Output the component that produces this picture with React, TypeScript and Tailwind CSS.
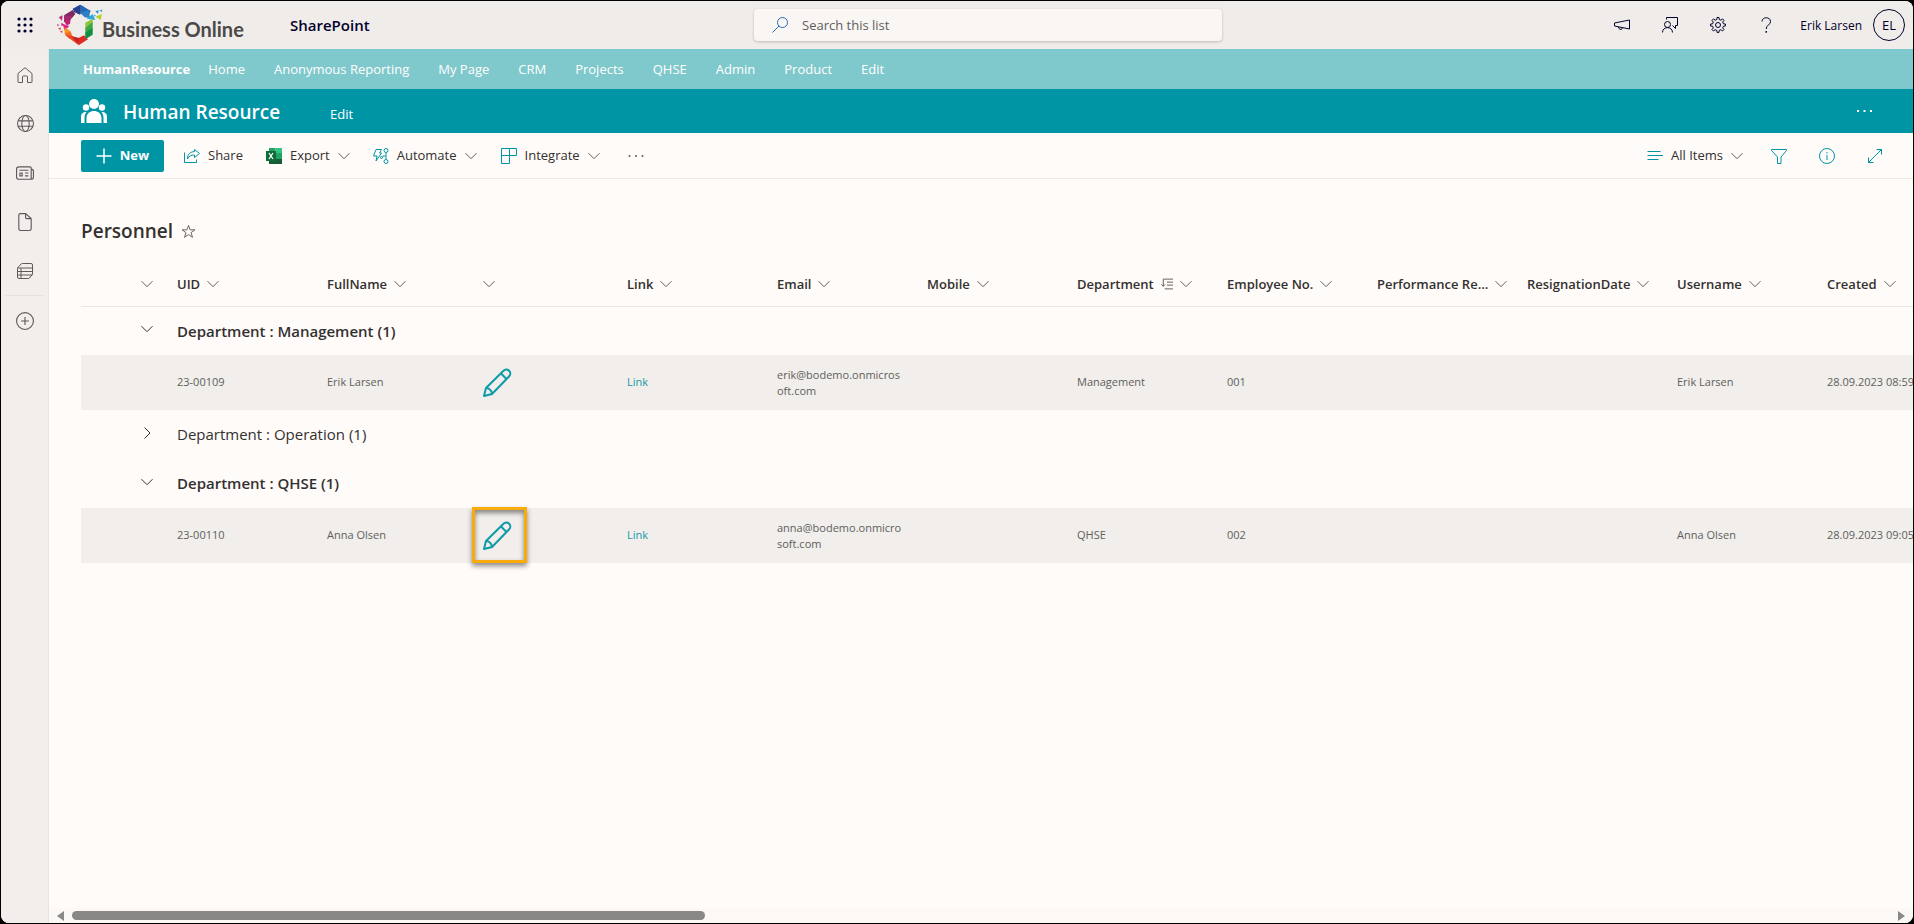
import React from 'react'

const Chevron: React.FC<{ className?: string; right?: boolean }> = ({ className = '', right }) => (
  <svg width="12" height="12" viewBox="0 0 12 12" fill="none" stroke="currentColor" className={`shrink-0 ${className}`}>
    <path d={right ? 'M3.5.5L9 6l-5.5 5.5' : 'M.5 3.2L6 8.7l5.5-5.5'} />
  </svg>
)

const Icon: React.FC<{ size?: number; children: React.ReactNode; className?: string }> = ({ size = 16, children, className = '' }) => (
  <svg width={size} height={size} viewBox="0 0 16 16" fill="none" stroke="currentColor" strokeWidth="1" className={`shrink-0 ${className}`}>
    {children}
  </svg>
)

const Logo = () => (
  <svg width="47" height="42" viewBox="9 6 141 126" className="shrink-0">
    <path d="M56 20L78 8l14 8-14 22-18-8z" fill="#27408f" />
    <path d="M78 8l32 18-6 16-26-10z" fill="#2a66b4" />
    <path d="M78 32l26-8 4 24-16-2z" fill="#2f7fc6" />
    <path d="M98 50l18-14 8 18z" fill="#29a9df" />
    <path d="M30 40l26-16 8 12-12 14z" fill="#7c2a63" />
    <path d="M30 40l24 2-6 14-18 4z" fill="#a02a6c" />
    <path d="M30 58l20-8-2 16-10 4z" fill="#c0246f" />
    <path d="M14 46l12-6-2 16zM22 62l10 6-10 4zM10 66l6 3-6 4z" fill="#c32a7c" />
    <path d="M26 66l20 6-14 14z" fill="#e0218a" />
    <path d="M12 80l8-4v8zM18 88l8-2-2 8z" fill="#e8402f" />
    <path d="M32 76l18 12v18l-18-10z" fill="#f7931e" />
    <path d="M32 94l18-4 6 14-10 6z" fill="#f26a21" />
    <path d="M32 98l22 4 20 28z" fill="#ee4423" />
    <path d="M52 102l24 6-2 22z" fill="#c9211e" />
    <path d="M74 108l16-8 12 12-28 18z" fill="#e02a24" />
    <path d="M94 62l22-12v14l-22 16z" fill="#8cc63f" />
    <path d="M94 78l22-18v22L94 98z" fill="#3fa845" />
    <path d="M94 92l22-14v20l-22 14z" fill="#0f8f43" />
    <path d="M124 28l10-3-2 10z" fill="#2a7fc6" />
    <path d="M136 26l9-4-1 8z" fill="#29a9df" />
    <path d="M124 44l20-8-4 18z" fill="#b5cf2b" />
    <path d="M120 38l6 2-5 4z" fill="#29a9df" />
  </svg>
)

const Pencil = () => (
  <svg width="30" height="30" viewBox="0 0 30 30" fill="none" stroke="#0f9aa8" strokeWidth="2" strokeLinejoin="round">
    <path d="M2 28l2-8L21.500 2.800a3.800 3.800 0 0 1 5.700 5.500L10 26z" />
    <path d="M19 5.500l5.500 5.500M4 20c3 0 6 2.500 6 6" />
  </svg>
)

const navItems = ['Home', 'Anonymous Reporting', 'My Page', 'CRM', 'Projects', 'QHSE', 'Admin', 'Product', 'Edit']

const columns = ['UID', 'FullName', '', 'Link', 'Email', 'Mobile', 'Department', 'Employee No.', 'Performance Re...', 'ResignationDate', 'Username', 'Created']

type Person = {
  uid: string
  name: string
  email: [string, string]
  department: string
  no: string
  created: string
  highlighted?: boolean
}

const groups: { name: string; open: boolean; people: Person[] }[] = [
  {
    name: 'Management',
    open: true,
    people: [{ uid: '23-00109', name: 'Erik Larsen', email: ['erik@bodemo.onmicros', 'oft.com'], department: 'Management', no: '001', created: '28.09.2023 08:59' }],
  },
  { name: 'Operation', open: false, people: [] },
  {
    name: 'QHSE',
    open: true,
    people: [{ uid: '23-00110', name: 'Anna Olsen', email: ['anna@bodemo.onmicro', 'soft.com'], department: 'QHSE', no: '002', created: '28.09.2023 09:05', highlighted: true }],
  },
]

const TopBar = () => (
  <header className="h-12 shrink-0 bg-[#f0ecea] flex items-center text-[#03002c]">
    <div className="flex items-center w-[753px] shrink-0">
      <button aria-label="App launcher" className="w-12 h-12 flex items-center justify-center">
        <svg width="16" height="16" viewBox="0 0 16 16" fill="currentColor">
          {[2, 8, 14].map((y) => [2, 8, 14].map((x) => <circle key={`${x}-${y}`} cx={x} cy={y} r="1.6" />))}
        </svg>
      </button>
      <a href="#" className="flex items-center ml-2 w-[193px]">
        <Logo />
        <span className="font-[Lato,sans-serif] font-bold text-[20px] leading-6 text-[#4b4a49] mt-2 -ml-0.5 whitespace-nowrap">Business Online</span>
      </a>
      <a href="#" className="ml-10 text-[15px] font-semibold">SharePoint</a>
    </div>
    <label className="w-[468px] h-8 bg-[#faf6f4] rounded shadow-[0_1px_3px_rgba(0,0,0,0.22)] flex items-center px-[18px] gap-[14px] text-[#2b6cb8]">
      <Icon>
        <circle cx="10.500" cy="5.500" r="5" />
        <path d="M7 9L.5 15.500" />
      </Icon>
      <input aria-label="Search this list" placeholder="Search this list" className="flex-1 pt-0.5 bg-transparent outline-none text-[13px] text-[#605e5c] placeholder:text-[#605e5c]" />
    </label>
    <div className="ml-auto flex items-center pr-2">
      <button aria-label="What's new" className="w-12 flex justify-center">
        <Icon>
          <path d="M.5 6l15-3v9l-15-3zM4.500 10c0 3 4 3 4 .8" />
        </Icon>
      </button>
      <button aria-label="Feedback" className="w-12 flex justify-center">
        <Icon>
          <circle cx="5.500" cy="7.500" r="3" />
          <path d="M.5 15.500c0-6.500 10-6.500 10 0M4.500 2.500v-2h11v8h-2v3l-3-3" />
        </Icon>
      </button>
      <button aria-label="Settings" className="w-12 flex justify-center">
        <Icon>
          <circle cx="8" cy="8" r="2.500" />
          <path d="M6.800 2.500l.2-2h2l.2 2 1.700.7 1.600-1.300 1.500 1.500-1.300 1.600.7 1.800 2 .2v2l-2 .2-.7 1.700 1.300 1.600-1.500 1.500-1.600-1.300-1.700.7-.2 2H7l-.2-2-1.700-.7L3.500 14 2 12.500l1.300-1.600-.7-1.700-2-.2V7l2-.2.7-1.800L2 3.400 3.500 1.900l1.600 1.300z" />
        </Icon>
      </button>
      <button aria-label="Help" className="w-12 flex justify-center">
        <Icon>
          <path d="M4 4.500C4 -.5 12.500-.5 12.500 4.500c0 3.500-4.300 3.500-4.300 7.500" />
          <path d="M8.200 14v1.800" strokeWidth="1.400" />
        </Icon>
      </button>
      <button className="flex items-center gap-[11px] ml-[10px] text-xs">
        <span className="pt-0.5">Erik Larsen</span>
        <span className="w-8 h-8 pt-0.5 rounded-full border border-[#03002c] flex items-center justify-center text-[13px]">EL</span>
      </button>
    </div>
  </header>
)

const railItem = 'w-12 h-[49px] flex items-center justify-center'

const SideRail = () => (
  <nav aria-label="App bar" className="w-12 pt-px shrink-0 bg-[#f3eeec] border-r border-[#e9e4e1] text-[#5d5a58]">
    <a href="#" aria-label="Home" className={railItem}>
      <Icon>
        <path d="M1 15V6.500L8 .7l7 5.800V15q0 .5-.5.5h-4V10q0-1-1-1h-3q-1 0-1 1v5.500h-4Q1 15.500 1 15z" />
      </Icon>
    </a>
    <a href="#" aria-label="My sites" className={railItem}>
      <Icon size={17}>
        <circle cx="8" cy="8" r="7.500" />
        <ellipse cx="8" cy="8" rx="3.500" ry="7.500" />
        <path d="M1 5.500h14M1 10.500h14" />
      </Icon>
    </a>
    <a href="#" aria-label="News" className={railItem}>
      <Icon size={18}>
        <path d="M2.500 2.500h10q1 0 1 1v10h-11q-2 0-2-2v-7q0-2 2-2zM13.500 4.500q2 0 2 2v5q0 2-2 2M3 5.500h8M8 8h3M8 10.500h3" />
        <path d="M3.500 8h2v2.500h-2z" />
      </Icon>
    </a>
    <a href="#" aria-label="Files" className={railItem}>
      <Icon size={18}>
        <path d="M3 .5h5.500l5 4.500v9q0 1.500-1.500 1.500H4Q2.500 15.500 2.500 14V2Q2.500 .5 4 .5M8.500 .5V4q0 1 1 1h4" />
      </Icon>
    </a>
    <a href="#" aria-label="Lists" className={railItem}>
      <Icon>
        <path d="M.5 5.500q0-1.500 1.500-2l2-2.500q.5-.5 1.500-.5H14q1.500 0 1.500 1.500v9L12.500 15q-.5.500-1.500.500H2q-1.500 0-1.500-1.500zM.5 5h15M.5 8.500h15M.5 12h15M4 5v10" />
      </Icon>
    </a>
    <div className="mx-1 border-t border-[#e6e1de]" />
    <button aria-label="Create" className={railItem}>
      <Icon size={18}>
        <circle cx="8" cy="8" r="7.500" />
        <path d="M8 4.500v7M4.500 8h7" />
      </Icon>
    </button>
  </nav>
)

const CommandBar = () => (
  <div className="h-[46px] shrink-0 border-b border-[#f1e8e3] pl-8 pr-[30px] flex items-center text-[13px] text-[#323130]">
    <button className="h-8 w-[83px] bg-[#0095a5] text-white font-bold rounded-xs flex items-center justify-center gap-2">
      <Icon>
        <path d="M8 .5v15M.5 8h15" strokeWidth="1.500" />
      </Icon>
      New
    </button>
    <button className="flex items-center gap-2 ml-5">
      <Icon className="text-[#0095a5]">
        <path d="M.5 4.500v10h12v-3M10.500 1.500l5 4-5 4v-2.500c-3.500 0-5.500 1-7 4 0-5 2.500-7 7-7.500z" />
      </Icon>
      Share
    </button>
    <button className="flex items-center gap-2 ml-[23px]">
      <svg width="16" height="16" viewBox="0 0 16 16" className="shrink-0">
        <path d="M3 0h6.500v5H3z" fill="#21a366" />
        <path d="M9.500 0H16v5H9.500z" fill="#33c481" />
        <path d="M3 5h6.500v6H3z" fill="#107c41" />
        <path d="M9.500 5H16v6H9.500z" fill="#21a366" />
        <path d="M3 11h13v5H3z" fill="#185c37" />
        <path d="M0 3h10v10H0z" fill="#0f6b38" />
        <path d="M3 5l4 6M7 5l-4 6" stroke="#fff" strokeWidth="1.300" />
      </svg>
      Export
      <Chevron className="text-[#605e5c]" />
    </button>
    <button className="flex items-center gap-2 ml-[23px]">
      <Icon className="text-[#0095a5]">
        <path d="M3 1.500h5.500L6.500 5h2L3 13l1-5H.500zM13 5v6M12.500 8h-3" />
        <circle cx="13" cy="2.500" r="2" />
        <circle cx="13" cy="13.500" r="2" />
        <circle cx="8.500" cy="9.500" r="1" />
      </Icon>
      Automate
      <Chevron className="text-[#605e5c]" />
    </button>
    <button className="flex items-center gap-2 ml-6">
      <Icon className="text-[#0095a5]">
        <path d="M.5.500h15v7H.500zM8.500.500v15h-8V.500" />
      </Icon>
      Integrate
      <Chevron className="text-[#605e5c]" />
    </button>
    <button aria-label="More actions" className="ml-7">
      <svg width="16" height="16" viewBox="0 0 16 16" fill="#605e5c">
        <circle cx="1.500" cy="8" r="1" />
        <circle cx="8" cy="8" r="1" />
        <circle cx="14.500" cy="8" r="1" />
      </svg>
    </button>
    <div className="ml-auto flex items-center text-[#0095a5]">
      <button className="flex items-center gap-2">
        <Icon>
          <path d="M.5 3.500h13M.5 7.500h15.500M.5 11.500h11" />
        </Icon>
        <span className="text-[#323130]">All Items</span>
        <Chevron className="text-[#605e5c]" />
      </button>
      <button aria-label="Filter" className="ml-7">
        <Icon>
          <path d="M.5 1.500h15v1L10 9v6.500H6.500V9L.5 2.500z" />
        </Icon>
      </button>
      <button aria-label="Details" className="ml-8">
        <Icon>
          <circle cx="8" cy="8" r="7.500" />
          <path d="M8 7v5M8 4v1.500" />
        </Icon>
      </button>
      <button aria-label="Expand content" className="ml-8">
        <Icon>
          <path d="M1.500 14.500l13-13M9.500 1.500h5v5M1.500 9.500v5h5" />
        </Icon>
      </button>
    </div>
  </div>
)

const PersonRow: React.FC<{ person: Person }> = ({ person }) => (
  <tr className="h-[55px] bg-[#f1eeeb] text-[11px] text-[#605e5c]">
    <td />
    <td>{person.uid}</td>
    <td>{person.name}</td>
    <td className="relative">
      <button aria-label={`Edit ${person.name}`} className="block ml-[5px]">
        <Pencil />
      </button>
      {person.highlighted && (
        <span className="absolute -left-[5px] -top-px w-[55px] h-14 border-3 border-[#faab0c] shadow-[0_3px_5px_rgba(0,0,0,0.45),inset_0_3px_5px_rgba(0,0,0,0.45)] pointer-events-none" />
      )}
    </td>
    <td><a href="#" className="text-[#0f9aa8]">Link</a></td>
    <td className="leading-4">{person.email[0]}<br />{person.email[1]}</td>
    <td />
    <td>{person.department}</td>
    <td>{person.no}</td>
    <td />
    <td />
    <td>{person.name}</td>
    <td className="whitespace-nowrap">{person.created}</td>
  </tr>
)

const PersonnelTable = () => (
  <div className="ml-8 pb-4 overflow-hidden">
    <table className="table-fixed w-[1896px] text-left border-collapse">
      <colgroup>
        <col className="w-24" />
        {columns.map((c, i) => <col key={i} className="w-[150px]" />)}
      </colgroup>
      <thead>
        <tr className="h-[43px] border-b border-[#e9e6e3] text-[13px] text-[#323130]">
          <th className="pl-[60px]">
            <button aria-label="Toggle all groups" className="block"><Chevron className="text-[#605e5c]" /></button>
          </th>
          {columns.map((c, i) => (
            <th key={i} className="font-semibold whitespace-nowrap">
              <button aria-label={c || 'Edit'} className={`flex items-center gap-[7px] ${c ? '' : 'pl-[6px]'}`}>
                {c && <span>{c}</span>}
                {c === 'Department' && (
                  <Icon size={12} className="text-[#605e5c]">
                    <path d="M5 1.500h11M8 5.500h8M8 9.500h8M5 14.500h11M5 1.500H3V11M.5 8.500L3 11l2.500-2.500" strokeWidth="1.300" />
                  </Icon>
                )}
                <Chevron className="text-[#605e5c]" />
              </button>
            </th>
          ))}
        </tr>
      </thead>
      <tbody>
        {groups.map((g) => (
          <React.Fragment key={g.name}>
            <tr className="h-[49px] text-[#323130]">
              <td className="pl-[60px] pb-[3px]">
                <button aria-label={`Toggle ${g.name}`} className="block"><Chevron right={!g.open} /></button>
              </td>
              <td colSpan={12} className={`text-[15px] ${g.open ? 'font-semibold' : ''}`}>Department : {g.name} (1)</td>
            </tr>
            {g.people.map((p) => <PersonRow key={p.uid} person={p} />)}
          </React.Fragment>
        ))}
      </tbody>
    </table>
  </div>
)

const App: React.FC = () => (
  <div className="h-screen bg-black p-px font-['Open_Sans','Noto_Sans',sans-serif]">
    <div className="h-full rounded-lg overflow-hidden flex flex-col bg-[#fffbf8]">
      <TopBar />
      <div className="flex-1 min-h-0 flex">
        <SideRail />
        <main className="flex-1 min-w-0 flex flex-col">
          <nav aria-label="Hub" className="h-10 pt-0.5 shrink-0 bg-[#7fc8cb] text-white text-[13px] flex items-center pl-[34px]">
            <a href="#" className="font-bold mr-[18px]">HumanResource</a>
            <div className="flex gap-[29px]">
              {navItems.map((item) => <a key={item} href="#">{item}</a>)}
            </div>
          </nav>
          <div className="h-11 shrink-0 bg-[#0095a5] text-white flex items-center pl-8 pr-10">
            <svg width="26" height="24" viewBox="0 0 26 24" fill="currentColor" className="shrink-0">
              <circle cx="13" cy="5" r="5" />
              <circle cx="5" cy="8.500" r="3.200" />
              <circle cx="21" cy="8.500" r="3.200" />
              <path d="M5.500 24v-5c0-9.500 15-9.500 15 0v5zM0 24v-6c0-3 1.500-5 5.500-5-1.500 2-2 4-2 6v5zM26 24v-6c0-3-1.500-5-5.500-5 1.500 2 2 4 2 6v5z" />
            </svg>
            <div className="flex items-baseline ml-4 pt-0.5 gap-[50px]">
              <a href="#" className="text-[19px] font-semibold">Human Resource</a>
              <a href="#" className="text-[13px]">Edit</a>
            </div>
            <button aria-label="More" className="ml-auto">
              <svg width="16" height="16" viewBox="0 0 16 16" fill="currentColor">
                <path d="M0 7h2v2H0zM6.500 7h2v2h-2zM13 7h2v2h-2z" />
              </svg>
            </button>
          </div>
          <CommandBar />
          <div className="pt-[38px] pl-8 pb-[18px] flex items-center gap-2">
            <h1 className="text-[19px] leading-7 font-semibold text-[#323130]">Personnel</h1>
            <button aria-label="Favorite" className="text-[#605e5c]">
              <Icon size={15}>
                <path d="M8 1.500l1.700 4.700h5.200l-4.200 3 1.600 5L8 11.300l-4.300 2.900 1.600-5-4.200-3h5.200z" />
              </Icon>
            </button>
          </div>
          <PersonnelTable />
          <div className="mt-auto h-[15px] shrink-0 bg-[#fbf8f5] flex items-center px-2 gap-2 text-[#8a8886]">
            <svg width="7" height="10" viewBox="0 0 7 10" fill="currentColor"><path d="M7 0v10L0 5z" /></svg>
            <div className="flex-1"><div className="h-[9px] w-[34.8%] rounded-full bg-[#8a8886]" /></div>
            <svg width="7" height="10" viewBox="0 0 7 10" fill="currentColor"><path d="M0 0v10l7-5z" /></svg>
          </div>
        </main>
      </div>
    </div>
  </div>
)

export default App
